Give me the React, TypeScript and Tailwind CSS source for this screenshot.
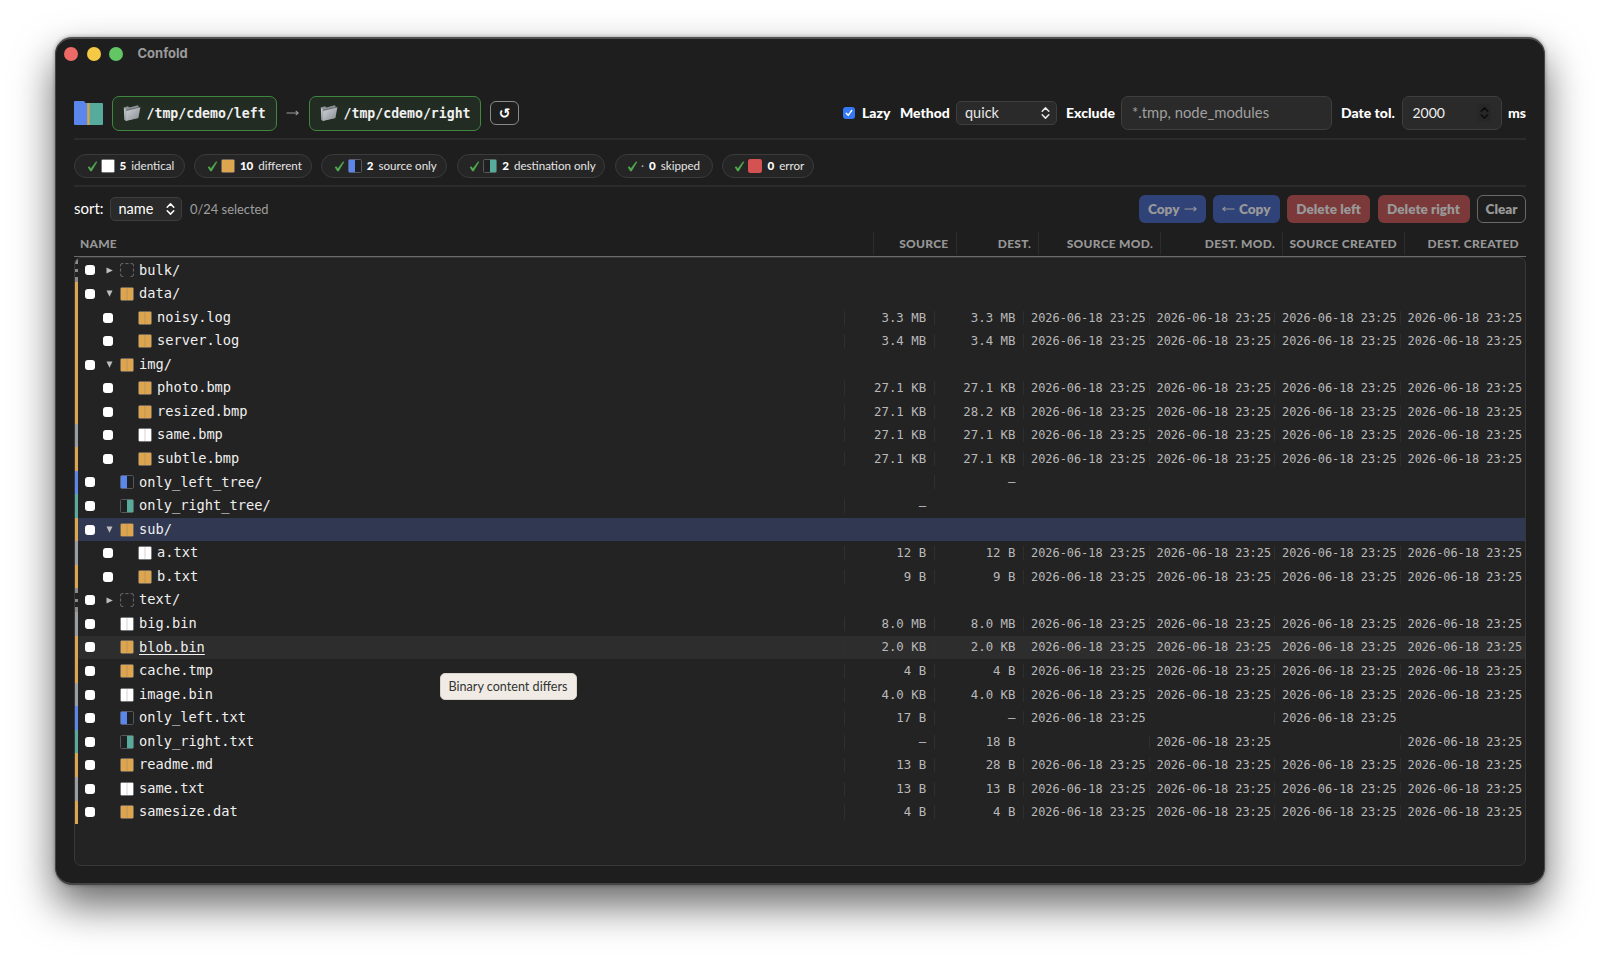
import type { ReactNode } from "react";
import { clsx } from "clsx";

type Status = "same" | "diff" | "left" | "right" | "pending" | "error";

interface Entry {
  name: string;
  status: Status;
  depth?: number;
  open?: boolean;
  src?: string;
  dst?: string;
  selected?: boolean;
  hovered?: boolean;
}

const STAMP = "2026-06-18 23:25";

const entries: Entry[] = [
  { name: "bulk/", status: "pending", open: false },
  { name: "data/", status: "diff", open: true },
  { name: "noisy.log", status: "diff", depth: 1, src: "3.3 MB", dst: "3.3 MB" },
  { name: "server.log", status: "diff", depth: 1, src: "3.4 MB", dst: "3.4 MB" },
  { name: "img/", status: "diff", open: true },
  { name: "photo.bmp", status: "diff", depth: 1, src: "27.1 KB", dst: "27.1 KB" },
  { name: "resized.bmp", status: "diff", depth: 1, src: "27.1 KB", dst: "28.2 KB" },
  { name: "same.bmp", status: "same", depth: 1, src: "27.1 KB", dst: "27.1 KB" },
  { name: "subtle.bmp", status: "diff", depth: 1, src: "27.1 KB", dst: "27.1 KB" },
  { name: "only_left_tree/", status: "left", dst: "—" },
  { name: "only_right_tree/", status: "right", src: "—" },
  { name: "sub/", status: "diff", open: true, selected: true },
  { name: "a.txt", status: "same", depth: 1, src: "12 B", dst: "12 B" },
  { name: "b.txt", status: "diff", depth: 1, src: "9 B", dst: "9 B" },
  { name: "text/", status: "pending", open: false },
  { name: "big.bin", status: "same", src: "8.0 MB", dst: "8.0 MB" },
  { name: "blob.bin", status: "diff", src: "2.0 KB", dst: "2.0 KB", hovered: true },
  { name: "cache.tmp", status: "diff", src: "4 B", dst: "4 B" },
  { name: "image.bin", status: "same", src: "4.0 KB", dst: "4.0 KB" },
  { name: "only_left.txt", status: "left", src: "17 B", dst: "—" },
  { name: "only_right.txt", status: "right", src: "—", dst: "18 B" },
  { name: "readme.md", status: "diff", src: "13 B", dst: "28 B" },
  { name: "same.txt", status: "same", src: "13 B", dst: "13 B" },
  { name: "samesize.dat", status: "diff", src: "4 B", dst: "4 B" },
];

const stripe: Record<Status, string> = {
  same: "bg-[#9a9da1]",
  diff: "bg-[#dea54f]",
  left: "bg-[#5b87ec]",
  right: "bg-[#57ab9c]",
  error: "bg-[#d55252]",
  pending: "",
};

function StatusIcon({ status, solid }: { status: Status; solid?: boolean }) {
  if (status === "pending") {
    return (
      <svg width="14" height="14" viewBox="0 0 14 14" fill="none" stroke="#6a6a6a" className="shrink-0">
        <path d="M.6 3.4V2Q.6.6 2 .6h1.4M5.4.6h3.2M10.6.6H12Q13.4.6 13.4 2v1.4M13.4 5.4v3.2M13.4 10.6V12q0 1.4-1.4 1.4h-1.4M3.4 13.4H2Q.6 13.4.6 12v-1.4M.6 8.6V5.4" />
      </svg>
    );
  }
  const fill = { same: "#ffffff", diff: "#dea54f", left: "#5b87ec", right: "#57ab9c", error: "#d55252" }[status];
  return (
    <svg width="14" height="14" viewBox="0 0 14 14" className="shrink-0">
      <rect x=".5" y=".5" width="13" height="13" rx="1.2" fill="#1f2022" stroke={status === "error" ? fill : "#55575b"} />
      {status !== "right" && <rect x=".8" y=".8" width="6.2" height="12.4" fill={fill} />}
      {status !== "left" && <rect x="7" y=".8" width="6.2" height="12.4" fill={fill} />}
      {!solid && (status === "same" || status === "diff") && (
        <path d="M7 1v12" stroke="#77706a" strokeOpacity=".4" strokeWidth=".8" />
      )}
    </svg>
  );
}

function FolderGlyph() {
  return (
    <svg width="18" height="18" viewBox="0 0 18 18">
      <defs>
        <linearGradient id="folder" x1="0" y1="0" x2="1" y2="1">
          <stop offset="0" stopColor="#d3d7da" />
          <stop offset="1" stopColor="#858a90" />
        </linearGradient>
      </defs>
      <path d="M.8 3.6 5 2.2l1.4 1.2L14.8 1.2l1 1.6L15 14 3 16.8z" fill="#8b9095" />
      <path d="M3.4 6.4 17.4 3 15.4 14 2.6 17z" fill="url(#folder)" />
      <path d="M3.4 6.4 17.4 3" stroke="#4d5156" strokeWidth=".7" />
      <path d="M.8 3.6 2.6 5.3 2.6 17 1.4 15.2z" fill="#c0c4c8" />
    </svg>
  );
}

function Chevrons() {
  return (
    <svg width="9" height="14" viewBox="0 0 9 14" fill="none" stroke="currentColor" strokeWidth="1.5" strokeLinecap="round" strokeLinejoin="round">
      <path d="M1.2 5.2 4.5 1.9l3.3 3.3M1.2 8.8l3.3 3.3 3.3-3.3" />
    </svg>
  );
}

function PathButton({ path, className }: { path: string; className: string }) {
  return (
    <button className={clsx("flex h-[35px] items-center rounded-[7px] border border-[#3f873f] bg-[#232c23] pl-[9.5px] font-['DejaVu_Sans_Mono',monospace] text-[13.2px] font-bold text-[#f0f0f0]", className)}>
      <FolderGlyph />
      <span className="ml-[6px] pt-px">{path}</span>
    </button>
  );
}

function Chip({ count, label, className, children }: { count: number; label: string; className: string; children: ReactNode }) {
  return (
    <div className={clsx("flex h-6 items-center rounded-full border border-[#3b3b3b] bg-[#252525] pl-[11.5px] text-[11.6px] text-[#e6e6e6]", className)}>
      <svg width="11" height="11" viewBox="0 0 10 10" className="mr-[3px] shrink-0">
        <path d="M.7 5.7 2 4.7l1.5 1.9L8.2.4 9.4.7 4.3 9.4H2.9z" fill="#4da64d" />
      </svg>
      {children}
      <b className="mr-[5px] ml-[5px] font-black text-white">{count}</b>
      <span className="whitespace-nowrap">{label}</span>
    </div>
  );
}

function ActionButton({ className, children }: { className: string; children: ReactNode }) {
  return (
    <button className={clsx("flex h-7 items-center justify-center gap-1 rounded-[6px] text-[13.6px] font-extrabold whitespace-nowrap text-[#989898]", className)}>
      {children}
    </button>
  );
}

function Arrow({ flip }: { flip?: boolean }) {
  return (
    <svg width="13" height="8" viewBox="0 0 13 8" fill="none" stroke="currentColor" strokeWidth="1.1" className={flip ? "rotate-180" : ""}>
      <path d="M.5 4h11.6M9.7 1.8 12.2 4 9.7 6.2" />
    </svg>
  );
}

function SizeCell({ value }: { value?: string }) {
  return (
    <div className={clsx("h-3.5 w-[89.3px] border-l pr-[7.5px] text-right text-[12.4px] leading-[14px]", value ? "border-[#303030]" : "border-transparent")}>
      {value}
    </div>
  );
}

function DateCell({ show }: { show: boolean }) {
  return (
    <div className={clsx("h-3.5 w-[125.5px] border-l pl-[7px] leading-[14px] whitespace-nowrap", show ? "border-[#2e2e2e]" : "border-transparent")}>
      {show && STAMP}
    </div>
  );
}

function Row({ entry }: { entry: Entry }) {
  const { name, status, depth = 0, open, src, dst } = entry;
  const hasSrc = !!src && src !== "—";
  const hasDst = !!dst && dst !== "—";
  return (
    <div className={clsx("flex h-[23.575px] items-center", entry.selected && "bg-[#313852]", entry.hovered && "bg-[#2d2d2d]")}>
      {status === "pending" ? (
        <div className="flex w-[3px] flex-col justify-between self-stretch">
          <i className="h-[5px] bg-[#8a8a8a]" />
          <i className="h-[3px] bg-[#8a8a8a]" />
          <i className="h-[5px] bg-[#8a8a8a]" />
        </div>
      ) : (
        <div className={clsx("w-[3px] self-stretch", stripe[status])} />
      )}
      <div className={clsx("flex items-center", depth ? "pl-[25px]" : "pl-[7px]")}>
        <div className="size-[10px] rounded-[3px] bg-white" />
        <div className="flex w-[25px] justify-center pl-[3px]">
          {open !== undefined && (
            <svg width="7" height="7" viewBox="0 0 7 7" fill="#bdbdbd" className={open ? "rotate-90" : ""}>
              <path d="M.5.5 6.8 3.5.5 6.5z" />
            </svg>
          )}
        </div>
        <StatusIcon status={status} />
        <span className={clsx("ml-[5px] text-[13.68px] leading-none text-[#f0f0f0]", entry.hovered && "underline underline-offset-2")}>
          {name}
        </span>
      </div>
      <div className="ml-auto flex text-[11.9px] text-[#b9b9b9]">
        <SizeCell value={src} />
        <SizeCell value={dst} />
        <DateCell show={hasSrc} />
        <DateCell show={hasDst} />
        <DateCell show={hasSrc} />
        <DateCell show={hasDst} />
      </div>
    </div>
  );
}

function HeaderCell({ wide, children }: { wide?: boolean; children: ReactNode }) {
  return (
    <div className={clsx("flex h-[23px] items-center justify-end border-l border-[#2c2c2c] pr-[7px]", wide ? "w-[122px]" : "w-[82.5px]")}>
      {children}
    </div>
  );
}

export default function App() {
  return (
    <div className="h-[958px] w-[1600px] overflow-hidden bg-white pt-[37px] pl-[55px] font-[Lato,sans-serif] text-white">
      <div className="relative flex h-[848px] w-[1490px] flex-col rounded-[17px] border-t-2 border-r border-b-2 border-l border-t-[#505050] border-r-[#454545] border-b-[#454545] border-l-[#454545] bg-[#1e1e1e] pr-[18px] pl-[18px] shadow-[0_20px_42px_rgba(0,0,0,0.6),0_0_4px_rgba(0,0,0,0.35)]">
        {/* Title bar */}
        <div className="-ml-[10px] flex h-[29px] items-center gap-[8.5px]">
          <i className="size-[14px] rounded-full bg-[#ee6a66]" />
          <i className="size-[14px] rounded-full bg-[#f5c944]" />
          <i className="size-[14px] rounded-full bg-[#62c664]" />
          <span className="ml-[6px] font-[Inter,sans-serif] text-[13px] font-bold text-[#9a9a9a]">Confold</span>
        </div>

        {/* Paths and scan options */}
        <div className="mt-[21px] flex h-[48px] items-center">
          <svg width="29" height="24" viewBox="0 0 29 24">
            <path d="M0 1q0-1 1-1h9l1.5 2h3v22H1q-1 0-1-1z" fill="#5b87ec" />
            <path d="M14 2h14q1 0 1 1v20q0 1-1 1H14z" fill="#57ab9c" />
            <path d="M13.2 2h2.4v22h-2.4z" fill="#d9a44e" />
          </svg>
          <PathButton path="/tmp/cdemo/left" className="ml-[9px] w-[164.5px]" />
          <span className="flex w-[32.5px] justify-center pr-px text-[#999]"><Arrow /></span>
          <PathButton path="/tmp/cdemo/right" className="w-[172px]" />
          <button className="ml-[9px] flex h-6 w-[29px] items-center justify-center rounded-[6px] border border-[#8a8a8a] font-['DejaVu_Sans',sans-serif] text-sm leading-none font-bold">
            ↺
          </button>

          <div className="ml-auto flex items-center text-[14px] font-black whitespace-nowrap">
            <span className="flex size-3 items-center justify-center rounded-[3px] bg-[#3478f6]">
              <svg width="8" height="8" viewBox="0 0 8 8" fill="none" stroke="#fff" strokeWidth="1.4" strokeLinecap="round" strokeLinejoin="round">
                <path d="M1.3 4.3 3.2 6.4 6.7 1.5" />
              </svg>
            </span>
            <span className="ml-[7px] w-[38px] pb-[2px]">Lazy</span>
            <span className="w-[56px] pb-[2px]">Method</span>
            <div className="flex h-6 w-[101px] items-center justify-between rounded-[5px] border border-[#3e3e3e] bg-[#2a2a2a] pr-1.5 pb-px pl-2 text-[14.5px] font-normal text-[#e8e8e8]">
              quick
              <Chevrons />
            </div>
            <span className="ml-[9px] w-[55px] pb-[2px]">Exclude</span>
            <div className="flex h-[34px] w-[211px] items-center rounded-[7px] border border-[#3e3e3e] bg-[#2a2a2a] pb-px pl-2.5 text-[14.8px] font-normal text-[#a0a0a0]">
              *.tmp, node_modules
            </div>
            <span className="ml-[9px] w-[60.5px] pb-[2px]">Date tol.</span>
            <div className="flex h-[34px] w-[100.5px] items-center justify-between rounded-[7px] border border-[#3e3e3e] bg-[#2a2a2a] pr-2.5 pb-px pl-2.5 text-[14px] font-normal text-[#f0f0f0]">
              2000
              <span className="flex h-[18px] w-[14px] items-center justify-center rounded bg-[#272727] text-[#0c0c0c]">
                <Chevrons />
              </span>
            </div>
            <span className="ml-[6px] w-[18px] pb-[2px]">ms</span>
          </div>
        </div>

        {/* Status filters */}
        <div className="mt-px flex h-[49px] items-center gap-[9.4px] border-y-2 border-[#2b2b2b] pt-[7px]">
          <Chip count={5} label="identical" className="w-[111px]"><StatusIcon status="same" solid /></Chip>
          <Chip count={10} label="different" className="w-[117.5px]"><StatusIcon status="diff" solid /></Chip>
          <Chip count={2} label="source only" className="w-[126px]"><StatusIcon status="left" /></Chip>
          <Chip count={2} label="destination only" className="w-[148.5px]"><StatusIcon status="right" /></Chip>
          <Chip count={0} label="skipped" className="w-[98px]"><span className="text-[#aaa]">·</span></Chip>
          <Chip count={0} label="error" className="w-[92.5px]"><StatusIcon status="error" solid /></Chip>
        </div>

        {/* Sorting and bulk actions */}
        <div className="mt-[8px] flex h-7 items-center">
          <span className="w-[35.5px] pb-px text-[15px]">sort:</span>
          <div className="flex h-6 w-[72.5px] items-center justify-between rounded-[5px] border border-[#3e3e3e] bg-[#2a2a2a] pr-1.5 pl-2 text-[14.5px]">
            name
            <Chevrons />
          </div>
          <span className="ml-2 pt-px text-[12.9px] text-[#9f9f9f]">0/24 selected</span>
          <div className="ml-auto flex gap-[7.5px]">
            <ActionButton className="w-[66.5px] bg-[#304378]">Copy <Arrow /></ActionButton>
            <ActionButton className="w-[66.5px] bg-[#304378]"><Arrow flip /> Copy</ActionButton>
            <ActionButton className="w-[83px] bg-[#7c3939]">Delete left</ActionButton>
            <ActionButton className="w-[92px] bg-[#7c3939]">Delete right</ActionButton>
            <ActionButton className="w-[49px] border border-[#696969]">Clear</ActionButton>
          </div>
        </div>

        {/* Column headings */}
        <div className="mt-[9px] flex h-[25px] items-start border-b border-[#6a6a6a] text-xs font-black tracking-[0.25px] text-[#969696]">
          <span className="flex h-[23px] items-center pl-[6px]">NAME</span>
          <div className="ml-auto flex">
            <HeaderCell>SOURCE</HeaderCell>
            <HeaderCell>DEST.</HeaderCell>
            <HeaderCell wide>SOURCE MOD.</HeaderCell>
            <HeaderCell wide>DEST. MOD.</HeaderCell>
            <HeaderCell wide>SOURCE CREATED</HeaderCell>
            <HeaderCell wide>DEST. CREATED</HeaderCell>
          </div>
        </div>

        {/* File tree */}
        <div className="h-[609px] overflow-hidden rounded-[7px] border border-[#383838] bg-[#232323] pt-[0.6px] font-['DejaVu_Sans_Mono',monospace]">
          {entries.map((entry) => (
            <Row key={entry.name} entry={entry} />
          ))}
        </div>

        <div className="absolute top-[634px] left-[383.5px] flex h-[27px] w-[137px] items-center justify-center rounded-[5px] border border-[#d8d3cb] bg-[#f0ece5] pt-px text-[12.6px] whitespace-nowrap text-[#333]">
          Binary content differs
        </div>
      </div>
    </div>
  );
}
